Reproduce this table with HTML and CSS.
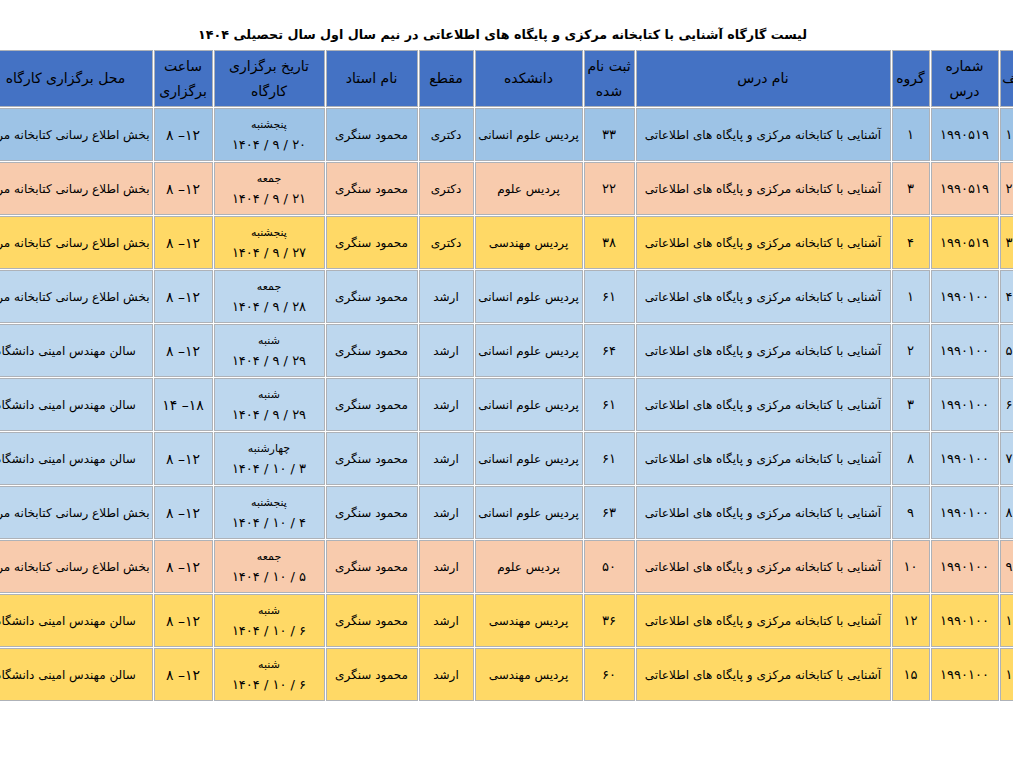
FILE: index.html
```html
<!DOCTYPE html>
<html lang="fa" dir="rtl">
<head>
<meta charset="utf-8">
<title>لیست کارگاه</title>
<link rel="stylesheet" href="styles.css">
</head>
<body>
<div class="page">
  <h1 class="title">لیست گارگاه آشنایی با کتابخانه مرکزی و پایگاه های اطلاعاتی در نیم سال اول سال تحصیلی ۱۴۰۴</h1>
  <table class="grid">
    <colgroup>
      <col class="c-row"><col class="c-code"><col class="c-group"><col class="c-name"><col class="c-reg"><col class="c-fac"><col class="c-level"><col class="c-teacher"><col class="c-date"><col class="c-time"><col class="c-place">
    </colgroup>
    <thead>
      <tr>
        <th class="idx">ردیف</th><th>شماره<br>درس</th><th>گروه</th><th>نام درس</th><th>ثبت نام<br>شده</th><th>دانشکده</th><th>مقطع</th><th>نام استاد</th><th>تاریخ برگزاری<br>کارگاه</th><th>ساعت<br>برگزاری</th><th>محل برگزاری کارگاه</th>
      </tr>
    </thead>
    <tbody>
      <tr class="r-blue">
        <td class="idx">۱</td><td class="num">۱۹۹۰۵۱۹</td><td class="num">۱</td><td>آشنایی با کتابخانه مرکزی و پایگاه های اطلاعاتی</td><td class="num">۳۳</td><td>پردیس علوم انسانی</td><td>دکتری</td><td>محمود سنگری</td><td class="date"><span class="day">پنجشنبه</span><span>۲۰ / ۹ / ۱۴۰۴</span></td><td class="time">۱۲– ۸</td><td>بخش اطلاع رسانی کتابخانه مرکزی</td>
      </tr>
      <tr class="r-peach">
        <td class="idx">۲</td><td class="num">۱۹۹۰۵۱۹</td><td class="num">۳</td><td>آشنایی با کتابخانه مرکزی و پایگاه های اطلاعاتی</td><td class="num">۲۲</td><td>پردیس علوم</td><td>دکتری</td><td>محمود سنگری</td><td class="date"><span class="day">جمعه</span><span>۲۱ / ۹ / ۱۴۰۴</span></td><td class="time">۱۲– ۸</td><td>بخش اطلاع رسانی کتابخانه مرکزی</td>
      </tr>
      <tr class="r-yellow">
        <td class="idx">۳</td><td class="num">۱۹۹۰۵۱۹</td><td class="num">۴</td><td>آشنایی با کتابخانه مرکزی و پایگاه های اطلاعاتی</td><td class="num">۳۸</td><td>پردیس مهندسی</td><td>دکتری</td><td>محمود سنگری</td><td class="date"><span class="day">پنجشنبه</span><span>۲۷ / ۹ / ۱۴۰۴</span></td><td class="time">۱۲– ۸</td><td>بخش اطلاع رسانی کتابخانه مرکزی</td>
      </tr>
      <tr class="r-light">
        <td class="idx">۴</td><td class="num">۱۹۹۰۱۰۰</td><td class="num">۱</td><td>آشنایی با کتابخانه مرکزی و پایگاه های اطلاعاتی</td><td class="num">۶۱</td><td>پردیس علوم انسانی</td><td>ارشد</td><td>محمود سنگری</td><td class="date"><span class="day">جمعه</span><span>۲۸ / ۹ / ۱۴۰۴</span></td><td class="time">۱۲– ۸</td><td>بخش اطلاع رسانی کتابخانه مرکزی</td>
      </tr>
      <tr class="r-light">
        <td class="idx">۵</td><td class="num">۱۹۹۰۱۰۰</td><td class="num">۲</td><td>آشنایی با کتابخانه مرکزی و پایگاه های اطلاعاتی</td><td class="num">۶۴</td><td>پردیس علوم انسانی</td><td>ارشد</td><td>محمود سنگری</td><td class="date"><span class="day">شنبه</span><span>۲۹ / ۹ / ۱۴۰۴</span></td><td class="time">۱۲– ۸</td><td>سالن مهندس امینی دانشگاه</td>
      </tr>
      <tr class="r-light">
        <td class="idx">۶</td><td class="num">۱۹۹۰۱۰۰</td><td class="num">۳</td><td>آشنایی با کتابخانه مرکزی و پایگاه های اطلاعاتی</td><td class="num">۶۱</td><td>پردیس علوم انسانی</td><td>ارشد</td><td>محمود سنگری</td><td class="date"><span class="day">شنبه</span><span>۲۹ / ۹ / ۱۴۰۴</span></td><td class="time">۱۸– ۱۴</td><td>سالن مهندس امینی دانشگاه</td>
      </tr>
      <tr class="r-light">
        <td class="idx">۷</td><td class="num">۱۹۹۰۱۰۰</td><td class="num">۸</td><td>آشنایی با کتابخانه مرکزی و پایگاه های اطلاعاتی</td><td class="num">۶۱</td><td>پردیس علوم انسانی</td><td>ارشد</td><td>محمود سنگری</td><td class="date"><span class="day">چهارشنبه</span><span>۳ / ۱۰ / ۱۴۰۴</span></td><td class="time">۱۲– ۸</td><td>سالن مهندس امینی دانشگاه</td>
      </tr>
      <tr class="r-light">
        <td class="idx">۸</td><td class="num">۱۹۹۰۱۰۰</td><td class="num">۹</td><td>آشنایی با کتابخانه مرکزی و پایگاه های اطلاعاتی</td><td class="num">۶۳</td><td>پردیس علوم انسانی</td><td>ارشد</td><td>محمود سنگری</td><td class="date"><span class="day">پنجشنبه</span><span>۴ / ۱۰ / ۱۴۰۴</span></td><td class="time">۱۲– ۸</td><td>بخش اطلاع رسانی کتابخانه مرکزی</td>
      </tr>
      <tr class="r-peach">
        <td class="idx">۹</td><td class="num">۱۹۹۰۱۰۰</td><td class="num">۱۰</td><td>آشنایی با کتابخانه مرکزی و پایگاه های اطلاعاتی</td><td class="num">۵۰</td><td>پردیس علوم</td><td>ارشد</td><td>محمود سنگری</td><td class="date"><span class="day">جمعه</span><span>۵ / ۱۰ / ۱۴۰۴</span></td><td class="time">۱۲– ۸</td><td>بخش اطلاع رسانی کتابخانه مرکزی</td>
      </tr>
      <tr class="r-yellow">
        <td class="idx">۱۰</td><td class="num">۱۹۹۰۱۰۰</td><td class="num">۱۲</td><td>آشنایی با کتابخانه مرکزی و پایگاه های اطلاعاتی</td><td class="num">۳۶</td><td>پردیس مهندسی</td><td>ارشد</td><td>محمود سنگری</td><td class="date"><span class="day">شنبه</span><span>۶ / ۱۰ / ۱۴۰۴</span></td><td class="time">۱۲– ۸</td><td>سالن مهندس امینی دانشگاه</td>
      </tr>
      <tr class="r-yellow">
        <td class="idx">۱۱</td><td class="num">۱۹۹۰۱۰۰</td><td class="num">۱۵</td><td>آشنایی با کتابخانه مرکزی و پایگاه های اطلاعاتی</td><td class="num">۶۰</td><td>پردیس مهندسی</td><td>ارشد</td><td>محمود سنگری</td><td class="date"><span class="day">شنبه</span><span>۶ / ۱۰ / ۱۴۰۴</span></td><td class="time">۱۲– ۸</td><td>سالن مهندس امینی دانشگاه</td>
      </tr>
    </tbody>
  </table>
</div>
</body>
</html>
```

FILE: styles.css
```css
html, body {
  margin: 0;
  padding: 0;
  background: #ffffff;
  overflow: hidden;
}

body {
  font-family: "DejaVu Sans", sans-serif;
  color: #000000;
  direction: rtl;
}

.page {
  width: 1013px;
  display: flex;
  flex-direction: column;
  align-items: center;
  padding-top: 22px;
}

.title {
  margin: 0 0 2px 0;
  padding-right: 8px;
  font-size: 12.7px;
  font-weight: bold;
  line-height: 25px;
  white-space: nowrap;
  text-align: center;
}

.grid {
  flex: none;
  table-layout: fixed;
  width: 1058px;
  border-collapse: separate;
  border-spacing: 1px;
  background: #ffffff;
}

.c-row { width: 35px; }
.c-code { width: 68px; }
.c-group { width: 38px; }
.c-name { width: 255px; }
.c-reg { width: 51px; }
.c-fac { width: 108px; }
.c-level { width: 55px; }
.c-teacher { width: 92px; }
.c-date { width: 111px; }
.c-time { width: 59px; }
.c-place { width: 174px; }

.grid th,
.grid td {
  border: 1px solid #aeb2b8;
  text-align: center;
  vertical-align: middle;
  padding: 0 2px;
  white-space: nowrap;
  overflow: hidden;
}

.grid th {
  background: #4472c4;
  height: 55px;
  font-size: 14px;
  font-weight: normal;
  line-height: 25px;
}

.grid td {
  height: 51px;
  font-size: 12px;
  line-height: 18px;
}

.grid .idx {
  text-align: left;
  padding-left: 5px;
  font-size: 13px;
}

.grid td.num {
  font-size: 13px;
}

.grid td.time {
  font-size: 14px;
}

.grid td.date span {
  display: block;
  font-size: 13px;
  line-height: 20px;
}

.grid td.date .day {
  font-size: 11px;
  line-height: 21px;
}

.r-blue td { background: #9dc3e6; }
.r-light td { background: #bdd7ee; }
.r-peach td { background: #f8cbad; }
.r-yellow td { background: #ffd966; }
```
